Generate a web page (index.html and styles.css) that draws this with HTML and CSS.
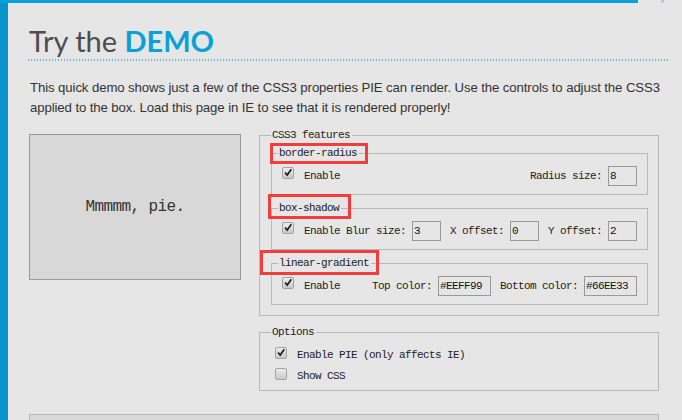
FILE: index.html
```html
<!DOCTYPE html>
<html lang="en">
<head>
    <meta charset="UTF-8">
    <meta name="viewport" content="width=device-width, initial-scale=1.0">
    <title>PIE - Try the DEMO</title>
    <link rel="stylesheet" href="styles.css">
</head>
<body>
    <div class="topbar">
        <span class="topbar-line"></span>
        <span class="topbar-dot"></span>
    </div>

    <div class="page">
        <h1 class="title">Try the <strong>DEMO</strong></h1>
        <div class="rule"></div>

        <p class="intro">This quick demo shows just a few of the CSS3 properties PIE can render. Use the controls to adjust the CSS3 applied to the box. Load this page in IE to see that it is rendered properly!</p>

        <div class="demo">
            <div class="pie-box">Mmmmm, pie.</div>

            <div class="controls">
                <fieldset class="features">
                    <legend>CSS3 features</legend>

                    <fieldset class="group">
                        <legend>border-radius</legend>
                        <div class="row">
                            <span class="check on"><svg viewBox="0 0 12 12"><path d="M2.5 5.5 L5 8.5 L10 1.5"/></svg></span>
                            <span>Enable</span>
                            <label class="field push">Radius size:<input class="num" value="8"></label>
                        </div>
                    </fieldset>

                    <fieldset class="group">
                        <legend>box-shadow</legend>
                        <div class="row">
                            <span class="check on"><svg viewBox="0 0 12 12"><path d="M2.5 5.5 L5 8.5 L10 1.5"/></svg></span>
                            <span>Enable</span>
                            <label class="field push">Blur size:<input class="num" value="3"></label>
                            <label class="field">X offset:<input class="num" value="0"></label>
                            <label class="field">Y offset:<input class="num" value="2"></label>
                        </div>
                    </fieldset>

                    <fieldset class="group">
                        <legend>linear-gradient</legend>
                        <div class="row">
                            <span class="check on"><svg viewBox="0 0 12 12"><path d="M2.5 5.5 L5 8.5 L10 1.5"/></svg></span>
                            <span>Enable</span>
                            <label class="field push">Top color:<input class="color" value="#EEFF99"></label>
                            <label class="field">Bottom color:<input class="color" value="#66EE33"></label>
                        </div>
                    </fieldset>
                </fieldset>

                <fieldset class="options">
                    <legend>Options</legend>
                    <div class="option">
                        <span class="check on"><svg viewBox="0 0 12 12"><path d="M2.5 5.5 L5 8.5 L10 1.5"/></svg></span>
                        <span>Enable PIE (only affects IE)</span>
                    </div>
                    <div class="option">
                        <span class="check"></span>
                        <span>Show CSS</span>
                    </div>
                </fieldset>

                <!-- annotation boxes drawn over the legends -->
                <span class="mark mark-radius"></span>
                <span class="mark mark-shadow"></span>
                <span class="mark mark-gradient"></span>
            </div>
        </div>

        <div class="css-box"></div>
    </div>
</body>
</html>
```

FILE: styles.css
```css
html, body {
    margin: 0;
    overflow: hidden;
}

body {
    background: #e6e6e6;
    font-family: "Liberation Sans", Arial, sans-serif;
    color: #333;
}

.topbar {
    display: flex;
    height: 3px;
}

.topbar-line {
    width: 638px;
    background: #0aa0da;
}

.topbar-dot {
    width: 3px;
    height: 3px;
    margin-left: 23px;
    background: #a6cfe8;
}

.page {
    height: 417px;
    box-sizing: border-box;
    padding: 0 14px 0 20px;
    border-left: 8px solid #0995cc;
    overflow: hidden;
}

.title {
    margin: 20px 0 0 1px;
    font-family: Lato, "Open Sans", sans-serif;
    font-size: 29px;
    font-weight: 400;
    line-height: 36px;
    color: #4d4d4d;
}

.title strong {
    font-weight: 700;
    color: #0aa0d8;
}

.rule {
    height: 2px;
    background: repeating-linear-gradient(to right, #66b4de 0 1px, transparent 1px 3px);
}

.intro {
    margin: 17px 0 0 2px;
    font-size: 13.2px;
    letter-spacing: -0.1px;
    line-height: 20px;
}

.demo {
    display: flex;
    align-items: flex-start;
    gap: 18px;
    margin-top: 10px;
}

.pie-box {
    display: flex;
    align-items: center;
    justify-content: center;
    width: 212px;
    height: 146px;
    box-sizing: border-box;
    margin: 6px 0 0 1px;
    border: 1px solid #999;
    background: #d8d8d8;
    font-family: "Liberation Mono", "Courier New", monospace;
    font-size: 16px;
    letter-spacing: -0.6px;
    color: #333;
}

.controls {
    position: relative;
    width: 400px;
    font-family: "Liberation Mono", "Courier New", monospace;
    font-size: 11px;
    letter-spacing: -0.6px;
    color: #222;
}

fieldset {
    margin: 0;
    min-width: 0;
    border: 1px solid #b8b8b8;
}

legend {
    padding: 0 2px 0 1px;
    line-height: 14px;
}

.features {
    padding: 4px 10px 10px 11px;
}

.group {
    padding: 6px 10px 8px 6px;
}

.group + .group {
    margin-top: 6px;
}

.row {
    display: flex;
    align-items: center;
    height: 20px;
    padding-left: 4px;
}

.row .check {
    align-self: flex-start;
    margin-top: 1px;
}

.field {
    display: flex;
    align-items: center;
    margin-left: 9px;
}

.field.push {
    margin-left: auto;
}

.field input {
    height: 20px;
    box-sizing: border-box;
    margin: 0 0 0 6px;
    padding: 0 1px;
    border: 1px solid #999;
    background: transparent;
    font: inherit;
    letter-spacing: inherit;
    color: #111;
    outline: none;
}

.num {
    width: 29px;
}

.color {
    width: 53px;
    font-weight: bold;
}

.check {
    display: inline-block;
    width: 12px;
    height: 12px;
    box-sizing: border-box;
    margin-right: 10px;
    border: 1px solid #a2a2a2;
    border-radius: 2px;
    background: linear-gradient(#ececec, #c9c9c9);
    flex-shrink: 0;
}

.check svg {
    display: block;
    width: 10px;
    height: 10px;
    fill: none;
    stroke: #1e1e1e;
    stroke-width: 2;
}

.options {
    margin-top: 9px;
    padding: 5px 10px 4px 11px;
}

.option {
    display: flex;
    align-items: center;
    height: 21px;
    padding-left: 4px;
}

.option .check {
    align-self: flex-start;
    margin-top: 3px;
}

.mark {
    position: absolute;
    box-sizing: border-box;
    border: 3px solid #f23d3d;
}

.mark-radius {
    left: 11px;
    top: 15px;
    width: 98px;
    height: 21px;
}

.mark-shadow {
    left: 9px;
    top: 66px;
    width: 83px;
    height: 25px;
}

.mark-gradient {
    left: 1px;
    top: 122px;
    width: 119px;
    height: 25px;
}

.css-box {
    width: 630px;
    height: 40px;
    box-sizing: border-box;
    margin: 23px 0 0 1px;
    border: 1px solid #b8b8b8;
    background: #d8d8d8;
}
```
